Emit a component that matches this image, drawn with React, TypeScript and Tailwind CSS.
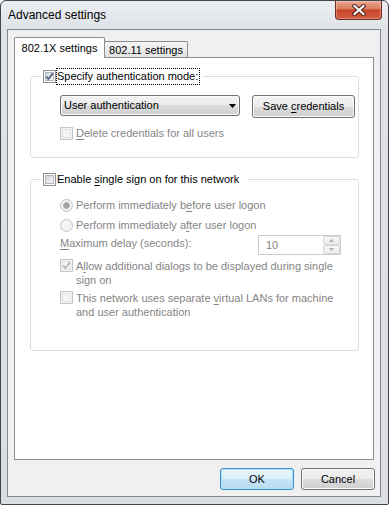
import React from "react";

function Checkbox({ checked, disabled }: { checked?: boolean; disabled?: boolean }) {
  return (
    <span
      className={`relative flex-none block w-[13px] h-[13px] border ${
        disabled ? "border-[#c6c6c6] bg-[#f4f4f4]" : "border-[#8e8f8f] bg-white"
      }`}
    >
      <span
        className={`absolute inset-[1px] border ${
          disabled
            ? "border-[#e2e2e2] bg-[#f4f4f4]"
            : "border-[#b3b7bd] bg-[linear-gradient(135deg,#cfd3d8,#f8f8f8)]"
        }`}
      />
      {checked && (
        <svg className="absolute left-0 top-0" width="11" height="11" viewBox="0 0 11 11">
          <path
            d="M2.2 5.6 L4.4 8 L8.9 2.4"
            fill="none"
            stroke={disabled ? "#b5b5b5" : "#4b5f86"}
            strokeWidth="1.7"
          />
        </svg>
      )}
    </span>
  );
}

function Radio({ selected }: { selected?: boolean }) {
  return (
    <span className="relative flex-none block w-[13px] h-[13px] rounded-full border border-[#c4c4c4] bg-[#f3f3f3]">
      {selected && (
        <span className="absolute left-[2px] top-[2px] w-[7px] h-[7px] rounded-full border border-[#b4b4b4] bg-[#a3a3a3]" />
      )}
    </span>
  );
}

function Btn({ children, def, w, h }: { children: React.ReactNode; def?: boolean; w: string; h: string }) {
  return (
    <div
      className={`${w} ${h} flex items-center justify-center rounded-[3px] border ${
        def
          ? "border-[#3c8fd0] bg-[linear-gradient(#eaf6fd,#dbeffa_50%,#c6e4f5_50%,#b7dcf1)] shadow-[inset_0_0_0_1px_#a8e2fb]"
          : "border-[#707070] bg-[linear-gradient(#f2f2f2,#ebebeb_50%,#dddddd_50%,#cfcfcf)] shadow-[inset_0_0_0_1px_#fcfcfc]"
      }`}
    >
      {children}
    </div>
  );
}

function U({ children }: { children: React.ReactNode }) {
  return <span className="underline underline-offset-[2px]">{children}</span>;
}

export default function App() {
  return (
    <div className="w-[389px] h-[505px] font-['Liberation_Sans',Arial,sans-serif] text-[11px] text-black bg-white">
      <div className="flex flex-col w-[389px] h-[505px] rounded-t-[6px] rounded-b-[2px] border border-[#42464c] bg-[linear-gradient(#eceff2,#dfe3e8_28px,#dadee3)]">
        {/* title bar */}
        <div className="relative h-[28px] flex-none flex items-center pl-[7px] text-[12px]">
          <span>Advanced settings</span>
          <div className="absolute right-[6px] top-0 w-[47px] h-[19px] rounded-b-[4px] border border-t-0 border-[#6e2a1d] bg-[linear-gradient(#eaa894,#dc7d63_42%,#c8462b_50%,#d25a3c)] shadow-[inset_0_0_0_1px_rgba(255,255,255,0.3)] flex items-center justify-center">
            <svg width="14" height="12" viewBox="0 0 14 12">
              <path d="M2.5 2 L11.5 10 M11.5 2 L2.5 10" stroke="#4a2018" strokeWidth="4.2" strokeLinecap="square" />
              <path d="M2.5 2 L11.5 10 M11.5 2 L2.5 10" stroke="#ffffff" strokeWidth="2.2" strokeLinecap="square" />
            </svg>
          </div>
        </div>

        {/* client area */}
        <div className="flex-1 ml-[6px] mr-[7px] mb-[7px] border border-[#83888f] bg-[#f0f0f0] flex flex-col pt-[7px] pl-[6px]">
          {/* tabs */}
          <div className="flex items-end h-[20px]">
            <div className="relative z-10 mb-[-1px] w-[91px] h-[21px] border-x border-t border-[#898c95] bg-white flex items-center justify-center rounded-t-[2px]">
              802.1X settings
            </div>
            <div className="w-[83px] h-[16px] border-t border-r border-[#898c95] bg-[linear-gradient(#f4f4f4,#e3e3e3)] flex items-center justify-center pt-[1px] rounded-tr-[2px]">
              802.11 settings
            </div>
          </div>

          {/* panel */}
          <div className="w-[360px] h-[403px] border border-[#898c95] bg-white">
            {/* group 1 */}
            <div className="relative ml-[15px] mt-[18px] w-[329px] h-[82px] rounded-[3px] border border-[#d5dfe5] pt-[18px] pl-[29px]">
              <div className="absolute left-[10px] top-[-9px] w-[162px] h-[17px] bg-white flex items-center pl-[2px]">
                <Checkbox checked />
                <span className="h-[17px] flex items-center border border-dotted border-black pr-[1px]">
                  Specify authentication mode:
                </span>
              </div>
              <div className="flex items-start gap-[12px]">
                <div className="w-[180px] h-[21px] flex items-center justify-between rounded-[3px] border border-[#707070] bg-[linear-gradient(#f2f2f2,#ebebeb_50%,#dddddd_50%,#cfcfcf)] shadow-[inset_0_0_0_1px_#fafafa] pl-[3px] pr-[3px]">
                  <span>User authentication</span>
                  <svg width="7" height="4" viewBox="0 0 7 4">
                    <path d="M0 0 H7 L3.5 4 Z" fill="#000" />
                  </svg>
                </div>
                <Btn w="w-[103px]" h="h-[23px]">
                  <span>
                    Save <U>c</U>redentials
                  </span>
                </Btn>
              </div>
              <div className="mt-[9px] h-[13px] flex items-center gap-[3px] text-[#858585]">
                <Checkbox disabled />
                <span>
                  <U>D</U>elete credentials for all users
                </span>
              </div>
            </div>

            {/* group 2 */}
            <div className="relative ml-[15px] mt-[21px] w-[329px] h-[172px] rounded-[3px] border border-[#d5dfe5] pt-[19px] pl-[29px] pr-[17px] text-[#858585]">
              <div className="absolute left-[10px] top-[-9px] w-[206px] h-[17px] bg-white flex items-center pl-[2px] text-black">
                <Checkbox />
                <span className="h-[17px] flex items-center border border-transparent">
                  Enable&nbsp;<U>s</U>ingle sign on for this network
                </span>
              </div>
              <div className="h-[13px] flex items-center gap-[3px]">
                <Radio selected />
                <span>
                  Perform immediately b<U>e</U>fore user logon
                </span>
              </div>
              <div className="mt-[7px] h-[13px] flex items-center gap-[3px]">
                <Radio />
                <span>
                  Perform immediately a<U>f</U>ter user logon
                </span>
              </div>
              <div className="mt-[3px] h-[20px] flex items-center justify-between">
                <span className="mt-[-3px]">
                  <U>M</U>aximum delay (seconds):
                </span>
                <div className="w-[83px] h-[20px] flex border border-[#c9cdd2] bg-white">
                  <span className="flex-1 flex items-center pl-[7px]">10</span>
                  <div className="w-[17px] flex flex-col">
                    <div className="h-[9px] flex items-center justify-center rounded-[2px] border border-[#d6d6d6] bg-[linear-gradient(#f7f7f7,#ececec)]">
                      <svg width="5" height="3" viewBox="0 0 5 3">
                        <path d="M0 3 H5 L2.5 0 Z" fill="#b0b0b0" />
                      </svg>
                    </div>
                    <div className="h-[9px] flex items-center justify-center rounded-[2px] border border-[#d6d6d6] bg-[linear-gradient(#f7f7f7,#ececec)]">
                      <svg width="5" height="3" viewBox="0 0 5 3">
                        <path d="M0 0 H5 L2.5 3 Z" fill="#b0b0b0" />
                      </svg>
                    </div>
                  </div>
                </div>
              </div>
              <div className="mt-[4px] flex items-start gap-[3px]">
                <Checkbox checked disabled />
                <span className="w-[264px] leading-[14px]">
                  A<U>l</U>low additional dialogs to be displayed during single sign on
                </span>
              </div>
              <div className="mt-[4px] flex items-start gap-[3px]">
                <Checkbox disabled />
                <span className="w-[264px] leading-[14px]">
                  This network uses separate <U>v</U>irtual LANs for machine and user authentication
                </span>
              </div>
            </div>
          </div>

          {/* buttons */}
          <div className="mt-[8px] flex justify-end gap-[7px] pr-[5px]">
            <Btn def w="w-[74px]" h="h-[22px]">
              OK
            </Btn>
            <Btn w="w-[74px]" h="h-[22px]">
              Cancel
            </Btn>
          </div>
        </div>
      </div>
    </div>
  );
}
